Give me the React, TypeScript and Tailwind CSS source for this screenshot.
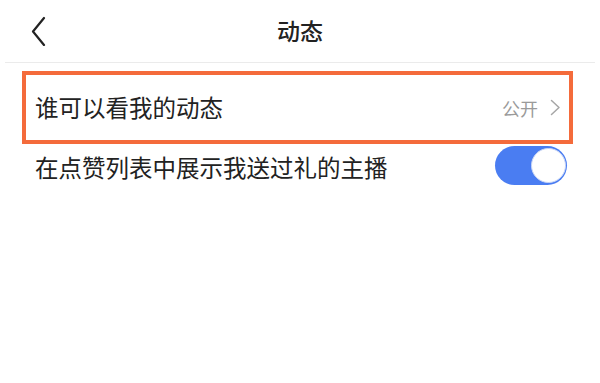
export default function App() {
  return (
    <div
      className="w-[600px] h-[383px] bg-white overflow-hidden"
      style={{ fontFamily: '"Noto Sans CJK SC", "Noto Sans", sans-serif' }}
    >
      {/* Header */}
      <div className="relative h-[63px] mx-[5px] border-b border-[#ebebeb] flex items-center justify-center">
        <button className="absolute left-[25px] top-[16px] w-[16px] h-[30px] flex items-center justify-center">
          <svg width="15" height="30" viewBox="0 0 15 30" fill="none">
            <path d="M13 2L2 15.5L13 29" stroke="#222" strokeWidth="2.2" strokeLinecap="round" strokeLinejoin="round" />
          </svg>
        </button>
        <h1 className="text-[23px] leading-none text-[#222] font-medium -mt-[2px]">动态</h1>
      </div>

      {/* Who can see */}
      <div className="mt-[8px] ml-[22px] mr-[27px] h-[73px] border-[4px] border-[#f46b3b] flex items-center justify-between pl-[9px] pr-[8px]">
        <span className="text-[23.5px] leading-none text-[#222]">谁可以看我的动态</span>
        <div className="flex items-center gap-[12px]">
          <span className="text-[18px] leading-none text-[#9a9a9a]">公开</span>
          <svg width="11" height="17" viewBox="0 0 11 17" fill="none">
            <path d="M1.5 1.5L9 8.5L1.5 15.5" stroke="#a6a6a6" strokeWidth="1.5" strokeLinecap="round" strokeLinejoin="round" />
          </svg>
        </div>
      </div>

      {/* Toggle row */}
      <div className="h-[47px] flex items-center justify-between pl-[35px] pr-[33px]">
        <span className="text-[23.5px] leading-none text-[#222]">在点赞列表中展示我送过礼的主播</span>
        <div className="relative w-[72px] h-[39px] rounded-full bg-[#4a7df2] -mt-[4px]">
          <div className="absolute right-[1px] top-[2px] w-[35px] h-[35px] rounded-full bg-white border border-[#c9d6f5]" />
        </div>
      </div>
    </div>
  )
}
